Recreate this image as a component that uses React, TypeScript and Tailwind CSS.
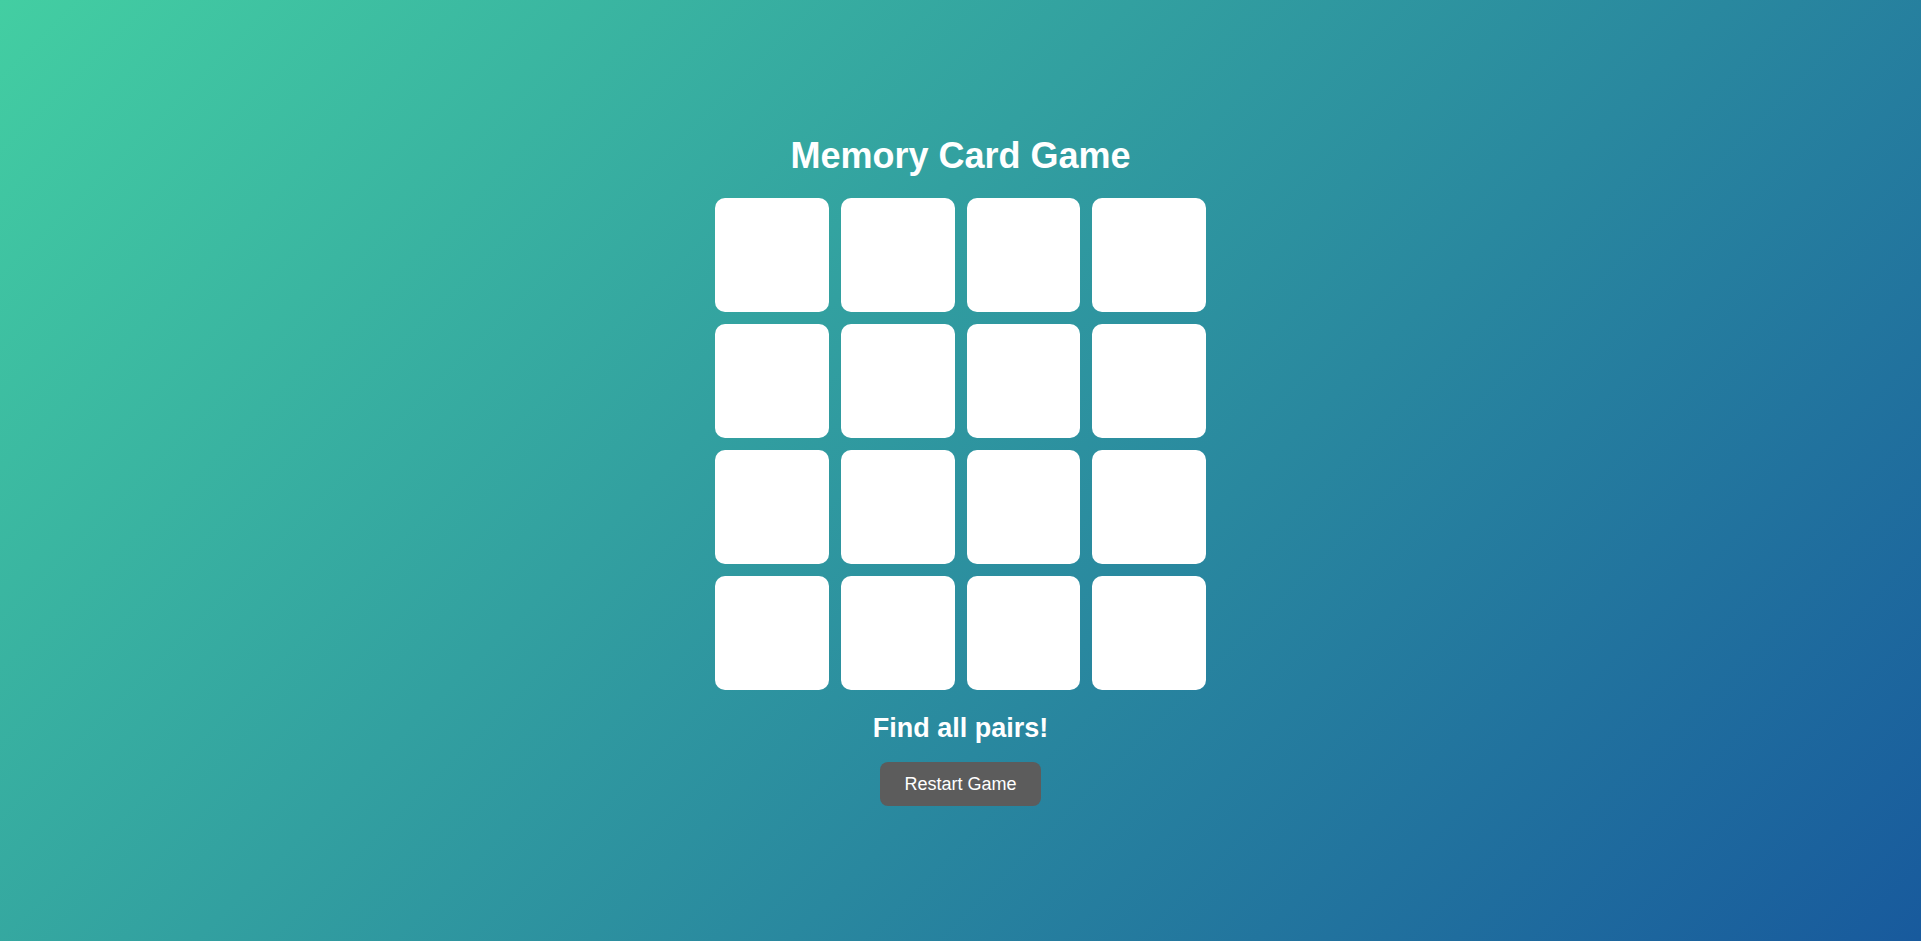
import { useState } from 'react';

export default function App() {
  const [cards] = useState(Array.from({ length: 16 }, (_, i) => i));

  return (
    <div
      className="min-h-screen w-full flex flex-col items-center justify-center bg-[linear-gradient(135deg,#43cea2,#185a9d)] text-white"
      style={{ fontFamily: '"Liberation Sans", Arial, sans-serif' }}
    >
      <h1 className="text-[36px] leading-[40px] font-bold">Memory Card Game</h1>

      {/* Card Grid */}
      <div className="mt-[22px] grid grid-cols-4 gap-3 w-[491px]">
        {cards.map((c) => (
          <div key={c} className="h-[114px] bg-white rounded-[10px] cursor-pointer" />
        ))}
      </div>

      <p className="mt-[22px] text-[27px] leading-[32px] font-bold">Find all pairs!</p>

      <button className="mt-[18px] px-6 py-3 text-[18px] leading-[20px] bg-[#5c5c5c] text-white rounded-lg">
        Restart Game
      </button>
    </div>
  );
}
